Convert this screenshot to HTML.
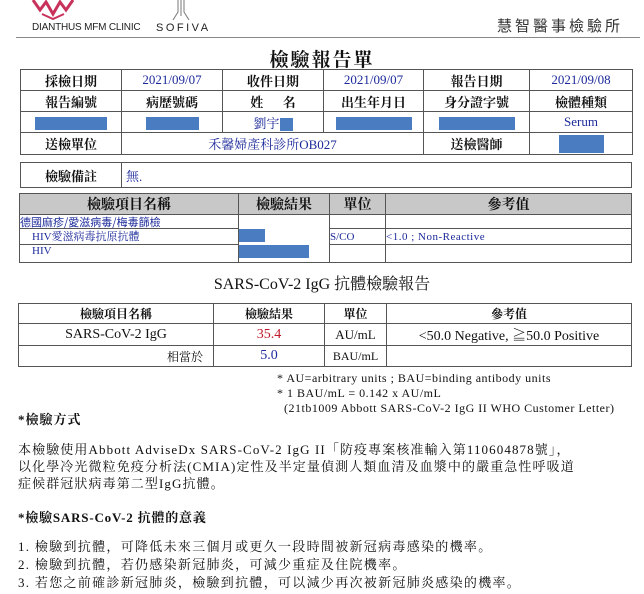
<!DOCTYPE html>
<html><head><meta charset="utf-8">
<style>
body{margin:0;width:644px;height:594px;background:#fff;position:relative;overflow:hidden;font-family:"Liberation Serif","Noto Serif CJK SC","Noto Sans CJK TC",serif;color:#111}
.a{position:absolute;white-space:nowrap}
table{position:absolute;border-collapse:collapse;table-layout:fixed}
td{border:1px solid #555;padding:0;text-align:center;white-space:nowrap;overflow:hidden;font-size:13px}
.b{color:#1c2a9a}
.r{display:inline-block;background:#4a7cc2;vertical-align:middle}
.bold{font-weight:bold}
</style></head><body>
<svg class="a" style="left:28px;top:0" width="50" height="20" viewBox="0 0 50 20">
<path d="M5 0 L12 10 L18 2 L25 14 L32 2 L38 10 L45 0" fill="none" stroke="#c8325a" stroke-width="3"/>
<path d="M14 14 L25 19 L36 14" fill="none" stroke="#c8325a" stroke-width="2"/>
</svg>
<div class="a" style="left:32px;top:22px;font:10px 'Liberation Sans',sans-serif;color:#222;letter-spacing:-0.2px">DIANTHUS MFM CLINIC</div>
<svg class="a" style="left:170px;top:0" width="22" height="20"><path d="M8 0 L8 12 L3 20 M14 0 L14 12 L19 20 M11 0 L11 16" fill="none" stroke="#777" stroke-width="1"/></svg>
<div class="a" style="left:156px;top:22px;font:11px 'Liberation Sans',sans-serif;color:#222;letter-spacing:2.5px">SOFIVA</div>
<div class="a" style="left:497px;top:15px;font:15px 'Noto Sans CJK TC',sans-serif;color:#333;letter-spacing:3px">慧智醫事檢驗所</div>
<div class="a" style="left:16px;top:37px;width:624px;height:1px;background:#888"></div>
<div class="a bold" style="left:0;width:644px;text-align:center;top:45px;font-size:19px;letter-spacing:2px">檢驗報告單</div>

<table style="left:20px;top:69px;width:612px">
<colgroup><col style="width:101px"><col style="width:101px"><col style="width:101px"><col style="width:100px"><col style="width:106px"><col style="width:103px"></colgroup>
<tr style="height:21px"><td class="bold">採檢日期</td><td class="b">2021/09/07</td><td class="bold">收件日期</td><td class="b">2021/09/07</td><td class="bold">報告日期</td><td class="b">2021/09/08</td></tr>
<tr style="height:21px"><td class="bold">報告編號</td><td class="bold">病歷號碼</td><td class="bold">姓&nbsp;&nbsp;&nbsp;&nbsp;&nbsp;&nbsp;名</td><td class="bold">出生年月日</td><td class="bold">身分證字號</td><td class="bold">檢體種類</td></tr>
<tr style="height:21px"><td><span class="r" style="width:72px;height:13px"></span></td><td><span class="r" style="width:53px;height:13px"></span></td><td class="b">劉宇<span class="r" style="width:13px;height:13px"></span></td><td><span class="r" style="width:76px;height:13px"></span></td><td><span class="r" style="width:76px;height:13px"></span></td><td class="b">Serum</td></tr>
<tr style="height:22px"><td class="bold">送檢單位</td><td colspan="3" class="b">禾馨婦產科診所OB027</td><td class="bold">送檢醫師</td><td><span class="r" style="width:45px;height:18px"></span></td></tr>
</table>

<table style="left:20px;top:162px;width:612px">
<colgroup><col style="width:101px"><col></colgroup>
<tr style="height:25px"><td class="bold">檢驗備註</td><td class="b" style="text-align:left;padding-left:4px">無.</td></tr>
</table>

<table style="left:19px;top:193px;width:613px">
<colgroup><col style="width:219px"><col style="width:91px"><col style="width:56px"><col></colgroup>
<tr style="height:19px;background:#c8c8c8"><td class="bold" style="font-size:14px">檢驗項目名稱</td><td class="bold" style="font-size:14px">檢驗結果</td><td class="bold" style="font-size:14px">單位</td><td class="bold" style="font-size:14px">參考值</td></tr>
<tr style="height:14px"><td class="b" style="text-align:left;font-size:11px;font-family:'Noto Sans CJK TC',sans-serif;line-height:12px">德國麻疹/愛滋病毒/梅毒篩檢</td><td style="border-bottom:none"></td><td></td><td></td></tr>
<tr style="height:13px"><td class="b" style="text-align:left;padding-left:12px;font-size:11px;line-height:12px">HIV愛滋病毒抗原抗體</td><td style="text-align:left;border-top:none;border-bottom:none"><span class="r" style="width:26px;height:13px;vertical-align:top"></span></td><td class="b" style="text-align:left;font-size:11px">S/CO</td><td class="b" style="text-align:left;font-size:11px;letter-spacing:0.5px">&lt;1.0 ; Non-Reactive</td></tr>
<tr style="height:18px"><td class="b" style="text-align:left;padding-left:12px;font-size:11px;vertical-align:top;line-height:12px">HIV</td><td style="text-align:left;border-top:none;vertical-align:top"><span class="r" style="width:70px;height:13px;vertical-align:top"></span></td><td></td><td></td></tr>
</table>

<div class="a" style="left:0;width:644px;text-align:center;top:271px;font-size:16px">SARS-CoV-2 IgG 抗體檢驗報告</div>

<table style="left:18px;top:303px;width:614px">
<colgroup><col style="width:195px"><col style="width:111px"><col style="width:62px"><col></colgroup>
<tr style="height:20px"><td class="bold" style="font-size:12px">檢驗項目名稱</td><td class="bold" style="font-size:12px">檢驗結果</td><td class="bold" style="font-size:12px">單位</td><td class="bold" style="font-size:12px">參考值</td></tr>
<tr style="height:22px"><td style="font-size:14px">SARS-CoV-2 IgG</td><td style="color:#c0182a;font-size:14px">35.4</td><td style="font-size:13px">AU/mL</td><td style="font-size:14px">&lt;50.0 Negative, ≧50.0 Positive</td></tr>
<tr style="height:21px"><td style="text-align:right;padding-right:10px;font-size:12px">相當於</td><td class="b" style="font-size:14px">5.0</td><td style="font-size:12px">BAU/mL</td><td></td></tr>
</table>

<div class="a" style="left:277px;top:371px;font-size:12px;line-height:15px;letter-spacing:0.5px">* AU=arbitrary units ; BAU=binding antibody units<br>* 1 BAU/mL = 0.142 x AU/mL<br>&nbsp;&nbsp;(21tb1009 Abbott SARS-CoV-2 IgG II WHO Customer Letter)</div>

<div class="a bold" style="left:18px;top:409px;font-size:13px;letter-spacing:1px">*檢驗方式</div>
<div class="a" style="left:18px;top:441px;font-size:13px;line-height:17px;letter-spacing:1.1px">本檢驗使用Abbott AdviseDx SARS-CoV-2 IgG II「防疫專案核准輸入第110604878號」，<br>以化學冷光微粒免疫分析法(CMIA)定性及半定量偵測人類血清及血漿中的嚴重急性呼吸道<br>症候群冠狀病毒第二型IgG抗體。</div>
<div class="a bold" style="left:18px;top:507px;font-size:13px;letter-spacing:0.8px">*檢驗SARS-CoV-2 抗體的意義</div>
<div class="a" style="left:18px;top:538px;font-size:13px;line-height:18px;letter-spacing:1.3px">1. 檢驗到抗體，可降低未來三個月或更久一段時間被新冠病毒感染的機率。<br>2. 檢驗到抗體，若仍感染新冠肺炎，可減少重症及住院機率。<br>3. 若您之前確診新冠肺炎，檢驗到抗體，可以減少再次被新冠肺炎感染的機率。</div>
</body></html>
